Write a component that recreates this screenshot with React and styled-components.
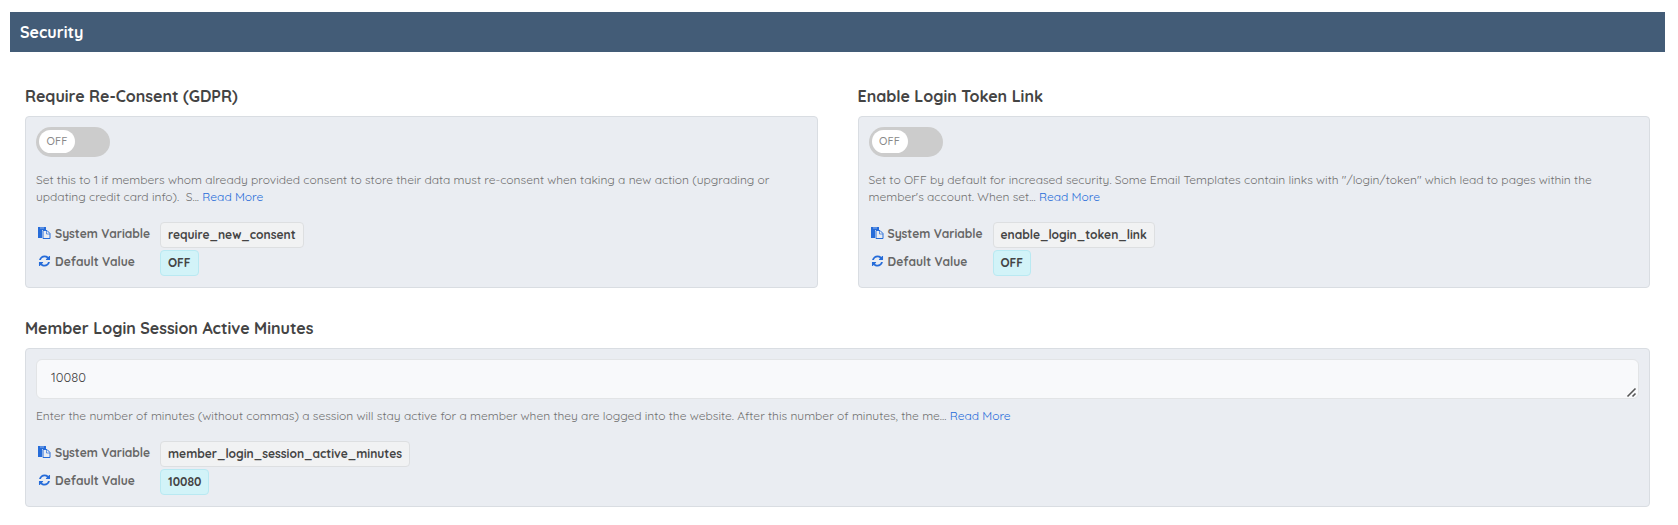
import React, { useId, useState } from 'react';
import styled, { createGlobalStyle } from 'styled-components';

const GlobalStyle = createGlobalStyle`
    * {
        box-sizing: border-box;
    }

    body {
        margin: 0;
        background: #fff;
        color: #444;
        font-family: Quicksand, Lato, sans-serif;
        font-size: 12px;
        line-height: 17px;
    }
`;

const Page = styled.main`
    padding: 12px 13px 18px 10px;
`;

const TitleBar = styled.h1`
    margin: 0;
    padding: 10px;
    background: #435c77;
    color: #fff;
    font-size: 16px;
    font-weight: 700;
    line-height: 20px;
`;

const Settings = styled.div`
    display: grid;
    grid-template-columns: 1fr 1fr;
    gap: 30px 40px;
    padding: 34px 15px 0;
`;

const Setting = styled.section`
    grid-column: ${props => (props.$wide ? '1 / -1' : 'auto')};
`;

const Heading = styled.h2`
    margin: 0 0 10px;
    color: #444;
    font-size: 16px;
    font-weight: 700;
    line-height: 20px;
`;

const Card = styled.div`
    padding: 10px 10px 11px;
    background: #eaedf2;
    border: 1px solid #d9dde2;
    border-radius: 4px;
`;

const Switch = styled.label`
    display: flex;
    width: 74px;
    height: 30px;
    padding: 3px;
    justify-content: ${props => (props.$on ? 'flex-end' : 'flex-start')};
    background: ${props => (props.$on ? '#266cd9' : '#ccc')};
    border-radius: 15px;
    cursor: pointer;
`;

const SwitchInput = styled.input.attrs({ type: 'checkbox', role: 'switch' })`
    appearance: none;
    width: 0;
    height: 0;
    margin: 0;
`;

const Knob = styled.span`
    width: 36px;
    height: 23px;
    background: #fff;
    border-radius: 12px;
    color: #888;
    font-size: 11px;
    font-weight: 500;
    line-height: 23px;
    text-align: center;
`;

const NumberBox = styled.textarea`
    display: block;
    width: 100%;
    height: 40px;
    padding: 9px 14px;
    background: #f8f9fb;
    border: 1px solid #e2e4e6;
    border-radius: 6px;
    color: #444;
    font: inherit;
    font-size: 13px;
    resize: vertical;

    &::-webkit-resizer {
        background: url("data:image/svg+xml,%3Csvg xmlns='http://www.w3.org/2000/svg' width='15' height='15'%3E%3Cpath d='M4.5 13.5l8-8M9.5 13.5l3-3' stroke='%23555' stroke-width='1.6'/%3E%3C/svg%3E") no-repeat;
    }
`;

const Description = styled.p`
    margin: ${props => props.$top}px 0 17px;
    color: #707070;
    white-space: pre-wrap;
`;

const ReadMore = styled.a`
    color: #266cd9;
    text-decoration: none;
`;

const Facts = styled.dl`
    display: grid;
    grid-template-columns: 124px 1fr;
    row-gap: 2px;
    margin: 0;
`;

const Term = styled.dt`
    display: flex;
    gap: 4px;
    align-items: center;
    height: 22px;
    padding-left: 2px;
    color: #666;
    font-weight: 700;

    svg {
        width: 13px;
        height: 12px;
        color: #266cd9;
    }
`;

const Value = styled.dd`
    display: flex;
    margin: 0;
`;

const Tag = styled.span`
    height: 26px;
    padding: 4px 7px;
    background: ${props => (props.$tone === 'info' ? '#d2f3f8' : '#f1f2f3')};
    border: 1px solid ${props => (props.$tone === 'info' ? '#b9e9f2' : '#dddfe1')};
    border-radius: 4px;
    color: #444;
    font-weight: 700;
    line-height: 16px;
`;

function PasteIcon() {
    return (
        <svg viewBox="0 0 13 12" fill="none" aria-hidden="true">
            <path d="M0 0h8v3H4v8H0z" fill="currentColor" />
            <path d="M2 1h4" stroke="#8fb2ea" />
            <path d="M5 3.500h4l3 3v5H5z" fill="#eaedf2" stroke="currentColor" />
            <path d="M8.500 3.500V7H12" stroke="currentColor" strokeWidth=".7" />
        </svg>
    );
}

function RefreshIcon() {
    return (
        <svg viewBox="-64 -64 1664 1664" fill="currentColor" aria-hidden="true">
            <path d="M1511 928q0 5-1 7-64 268-268 434.500T764 1536q-146 0-282.500-55T238 1324l-129 129q-19 19-45 19t-45-19-19-45V960q0-26 19-45t45-19h448q26 0 45 19t19 45-19 45l-137 137q71 66 161 102t187 36q134 0 250-65t186-179q11-17 53-117 8-23 30-23h192q13 0 22.500 9.500t9.500 22.500zM1536 128v448q0 26-19 45t-45 19h-448q-26 0-45-19t-19-45 19-45l138-138Q969 256 768 256q-134 0-250 65T332 500q-11 17-53 117-8 23-30 23H50q-13 0-22.500-9.500T18 608v-7q65-268 270-434.500T768 0q146 0 284 55.500T1297 212l130-129q19-19 45-19t45 19 19 45z" />
        </svg>
    );
}

function Details({ variable, value }) {
    return (
        <Facts>
            <Term>
                <PasteIcon />
                System Variable
            </Term>
            <Value>
                <Tag>{variable}</Tag>
            </Value>
            <Term>
                <RefreshIcon />
                Default Value
            </Term>
            <Value>
                <Tag $tone="info">{value}</Tag>
            </Value>
        </Facts>
    );
}

function SwitchSetting({ title, variable, children }) {
    const [on, setOn] = useState(false);

    return (
        <Setting>
            <Heading>{title}</Heading>
            <Card>
                <Switch $on={on}>
                    <SwitchInput aria-label={title} checked={on} onChange={e => setOn(e.target.checked)} />
                    <Knob>{on ? 'ON' : 'OFF'}</Knob>
                </Switch>
                <Description $top={14}>
                    {children} <ReadMore href="#">Read More</ReadMore>
                </Description>
                <Details variable={variable} value="OFF" />
            </Card>
        </Setting>
    );
}

export default function App() {
    const minutesId = useId();

    return (
        <>
            <GlobalStyle />
            <Page>
                <TitleBar>Security</TitleBar>
                <Settings>
                    <SwitchSetting title="Require Re-Consent (GDPR)" variable="require_new_consent">
                        {'Set this to 1 if members whom already provided consent to store their data must re-consent when taking a new action (upgrading or updating credit card info).  S...'}
                    </SwitchSetting>
                    <SwitchSetting title="Enable Login Token Link" variable="enable_login_token_link">
                        {'Set to OFF by default for increased security. Some Email Templates contain links with "/login/token" which lead to pages within the member\'s account. When set...'}
                    </SwitchSetting>
                    <Setting $wide>
                        <Heading>
                            <label htmlFor={minutesId}>Member Login Session Active Minutes</label>
                        </Heading>
                        <Card>
                            <NumberBox id={minutesId} rows={1} defaultValue="10080" />
                            <Description $top={8}>
                                Enter the number of minutes (without commas) a session will stay active for a member when
                                they are logged into the website. After this number of minutes, the me...{' '}
                                <ReadMore href="#">Read More</ReadMore>
                            </Description>
                            <Details variable="member_login_session_active_minutes" value="10080" />
                        </Card>
                    </Setting>
                </Settings>
            </Page>
        </>
    );
}
